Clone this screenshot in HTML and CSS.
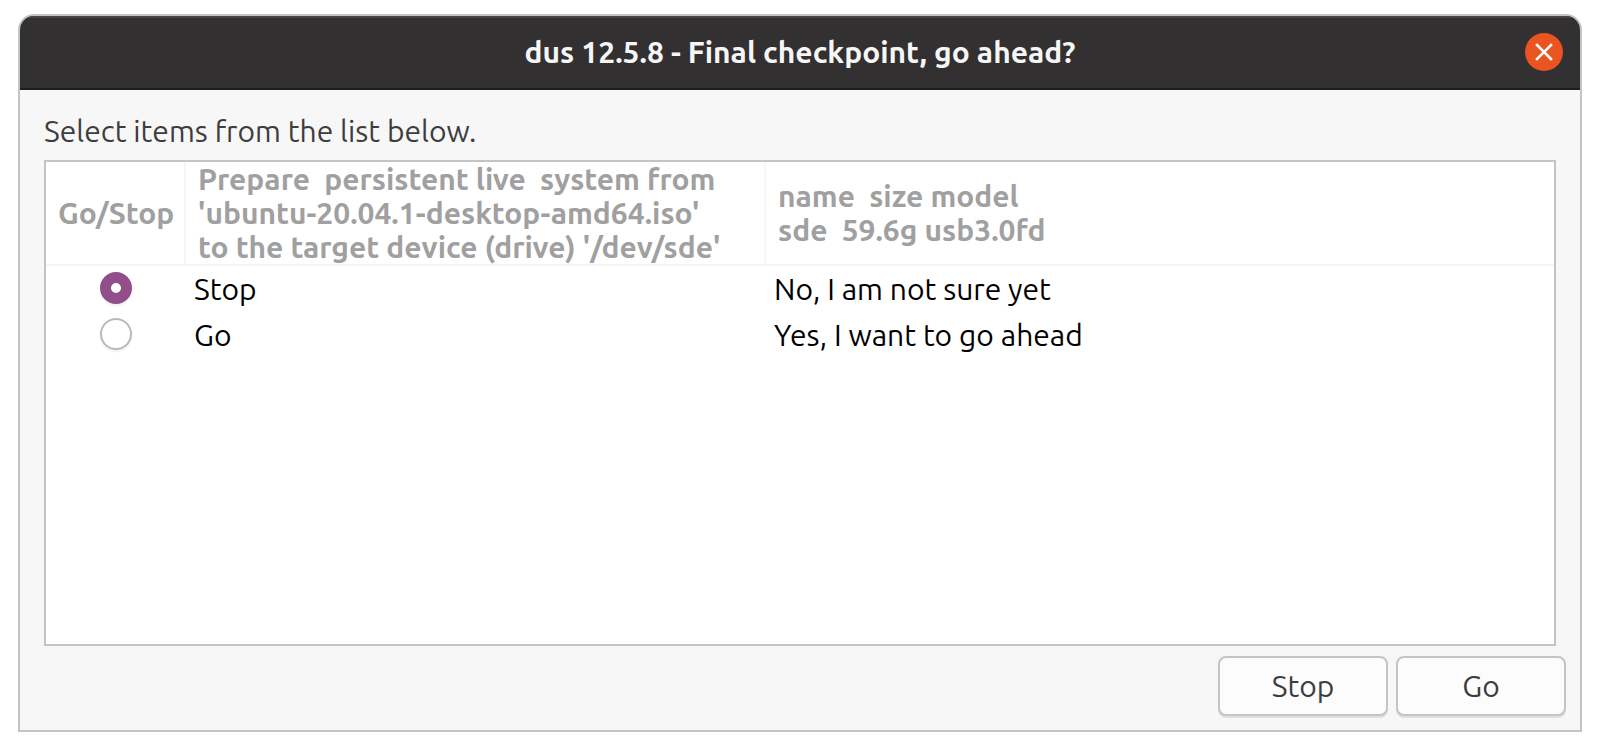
FILE: index.html
```
<!DOCTYPE html>
<html lang="en">
<head>
<meta charset="utf-8">
<title>dus 12.5.8 - Final checkpoint, go ahead?</title>
<link rel="stylesheet" href="styles.css">
</head>
<body>
<main class="window">
  <header class="titlebar">
    <h1 class="title">dus 12.5.8 - Final checkpoint, go ahead?</h1>
    <button class="close" type="button" aria-label="Close">
      <svg viewBox="0 0 38 38" width="38" height="38" aria-hidden="true">
        <path d="M12 12L26 26M26 12L12 26" fill="none" stroke="#fff" stroke-width="2.6" stroke-linecap="square"/>
      </svg>
    </button>
  </header>
  <form class="content">
    <p class="prompt">Select items from the list below.</p>
    <div class="list">
      <table class="table">
        <thead>
          <tr>
            <th class="pick" scope="col">Go/Stop</th>
            <th class="action" scope="col">Prepare  persistent live  system from
'ubuntu-20.04.1-desktop-amd64.iso'
to the target device (drive) '/dev/sde'</th>
            <th scope="col">name  size model
sde  59.6g usb3.0fd</th>
          </tr>
        </thead>
        <tbody>
          <tr>
            <td class="pick"><input class="radio" type="radio" name="choice" id="stop" checked></td>
            <td><label for="stop">Stop</label></td>
            <td>No, I am not sure yet</td>
          </tr>
          <tr>
            <td class="pick"><input class="radio" type="radio" name="choice" id="go"></td>
            <td><label for="go">Go</label></td>
            <td>Yes, I want to go ahead</td>
          </tr>
        </tbody>
      </table>
    </div>
    <div class="actions">
      <button class="button" type="button">Stop</button>
      <button class="button" type="button">Go</button>
    </div>
  </form>
</main>
</body>
</html>
```
FILE: styles.css
```
* {
  box-sizing: border-box;
}

body {
  display: flex;
  min-height: 100vh;
  margin: 0;
  padding: 14px 18px 18px;
  background: #fff;
  color: #3d3d3d;
  font: 30px/34px Ubuntu, "Noto Sans", sans-serif;
}

.window {
  display: flex;
  flex: 1;
  flex-direction: column;
  overflow: hidden;
  border: 2px solid #c4c4c4;
  border-radius: 16px 16px 0 0;
  background: #f7f7f7;
}

.titlebar {
  display: grid;
  grid-template-columns: 1fr auto 1fr;
  align-items: center;
  padding: 15px 17px 17px;
  border-top: 2px solid #454344;
  border-bottom: 2px solid #1f1c1d;
  background: #323030;
}

.title {
  grid-column: 2;
  margin: 0;
  color: #f6f6f6;
  font-size: 30px;
  line-height: 38px;
}

.close {
  display: flex;
  justify-self: end;
  padding: 0;
  border: 0;
  border-radius: 50%;
  background: #e95420;
}

.content {
  display: flex;
  flex: 1;
  flex-direction: column;
  padding: 24px 14px 14px 24px;
}

.prompt {
  margin: 0 0 12px;
}

.list {
  flex: 1;
  margin-right: 10px;
  border: 2px solid #c4c4c4;
  background: #fff;
}

.table {
  width: 100%;
  border-collapse: separate;
  border-spacing: 0;
  table-layout: fixed;
  color: #000;
}

th {
  padding: 0 12px;
  border-right: 2px solid #f6f6f6;
  border-bottom: 2px solid #f6f6f6;
  color: #a0a0a0;
  font-size: 30px;
  text-align: left;
  white-space: pre;
}

th:last-child {
  border-right: 0;
}

th.pick {
  width: 140px;
}

th.action {
  width: 580px;
}

td {
  height: 46px;
  padding: 0 8px;
}

td.pick {
  padding-bottom: 2px;
}

.radio {
  display: block;
  width: 32px;
  height: 32px;
  margin: 0 auto;
  border: 2px solid #bababa;
  border-radius: 50%;
  background: #fff;
  box-shadow: 0 2px 2px #f0f0f0;
  appearance: none;
}

.radio:checked {
  border: 11px solid #924d8b;
}

.actions {
  display: flex;
  justify-content: flex-end;
  gap: 8px;
  margin-top: 10px;
}

.button {
  width: 170px;
  height: 60px;
  border: 2px solid #c4c4c4;
  border-radius: 8px;
  background: #fcfcfc;
  box-shadow: 0 2px 0 #dfdfdf;
  color: inherit;
  font: inherit;
}
```
